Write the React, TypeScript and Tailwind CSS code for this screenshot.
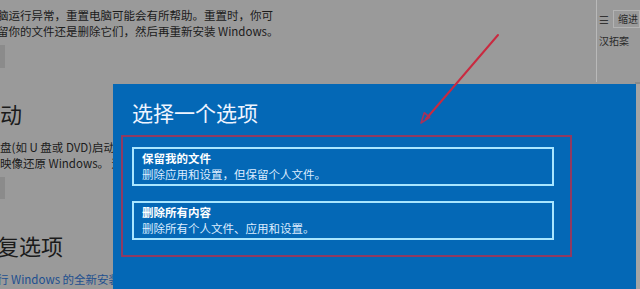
import React from 'react';

const cjk = { fontFamily: '"Noto Sans CJK SC", "Noto Sans", sans-serif' };

const OptionBox = ({ title, desc }: { title: string; desc: string }) => (
  <div className="w-[422px] h-[39px] border-2 border-[#a9e6ff] pl-[8px] pt-[1px]">
    <div className="text-[11.5px] leading-[16px] font-bold text-white">{title}</div>
    <div className="text-[11.5px] leading-[16px] text-[#dcecff]">{desc}</div>
  </div>
);

export default function App() {
  return (
    <div className="relative w-[640px] h-[289px] overflow-hidden bg-[#9a9a9a] text-[#1b1b1b]" style={cjk}>
      <div className="flex h-full">
        {/* settings page behind the dialog */}
        <div className="flex-1 min-w-0 pt-[7px] -ml-[3px] whitespace-nowrap">
          <div className="text-[11.5px] leading-[16px]">脑运行异常，重置电脑可能会有所帮助。重置时，你可</div>
          <div className="text-[11.5px] leading-[16px]">留你的文件还是删除它们，然后再重新安装 Windows。</div>
          <div className="mt-[6px] ml-[3px] w-[5px] h-[23px] bg-[#8b8b8b]"></div>

          <div className="mt-[31px] text-[22px] leading-[28px] ml-[3px]">动</div>
          <div className="mt-[12px] text-[11.5px] leading-[16px] ml-[3px]">盘(如 U 盘或 DVD)启动电脑，更改 Windows 启动设置，或者从系统</div>
          <div className="text-[11.5px] leading-[16px] ml-[3px]">映像还原 Windows。 这将重新启动电脑。</div>
          <div className="mt-[6px] ml-[3px] w-[5px] h-[22px] bg-[#8b8b8b]"></div>

          <div className="mt-[32px] text-[22px] leading-[28px]">复选项</div>
          <div className="mt-[12px] text-[11.5px] leading-[16px] text-[#1d4f8f]">行 Windows 的全新安装</div>
        </div>

        {/* right side of the window */}
        <div className="w-[44px] flex flex-col">
          <div className="h-[82px] border-l border-[#b9b9b9] pt-[10px] pl-[2px]">
            <div className="flex items-center gap-[4px]">
              <span className="text-[11px] leading-[18px] text-[#333]">☰</span>
              <div className="h-[18px] flex-1 border border-[#b3b3b3] pl-[4px] text-[10px] leading-[16px] text-[#2a2a2a]">缩进</div>
            </div>
            <div className="mt-[6px] text-[10px] leading-[14px] text-[#2a2a2a] whitespace-nowrap">汉拓案</div>
          </div>
          <div className="flex-1 flex justify-end">
            <div className="w-[5px] h-full bg-[#a4a4a4] border-t-2 border-[#8a8a8a]"></div>
          </div>
        </div>
      </div>

      {/* dialog */}
      <div className="absolute left-[113px] top-[84px] w-[523px] h-[205px] bg-[#0468b6]">
        <div className="pl-[19px] pt-[14px] text-[21px] leading-[28px] text-[#eef4ff]">选择一个选项</div>
        <div className="mt-[9px] ml-[8px] w-[451px] h-[122px] border-2 border-[#8f3a62] pl-[9px] pt-[10px] flex flex-col gap-[15px]">
          <OptionBox title="保留我的文件" desc="删除应用和设置，但保留个人文件。" />
          <OptionBox title="删除所有内容" desc="删除所有个人文件、应用和设置。" />
        </div>
      </div>

      {/* red arrow annotation */}
      <svg className="absolute left-0 top-0" width="640" height="289" viewBox="0 0 640 289">
        <line x1="498" y1="35" x2="426" y2="119" stroke="#c92a40" strokeWidth="2" strokeLinecap="round" />
        <polygon points="421,123 424.3,112.7 429.7,117.3" fill="none" stroke="#a8325a" strokeWidth="1.6" strokeLinejoin="round" />
      </svg>
    </div>
  );
}
